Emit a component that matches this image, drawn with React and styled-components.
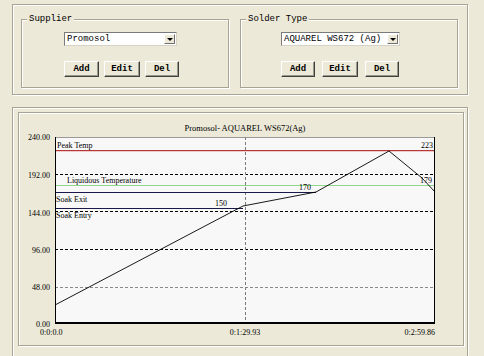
import React from 'react';
import styled, { createGlobalStyle } from 'styled-components';

const Global = createGlobalStyle`
  html, body { margin: 0; padding: 0; background: #ECE9D8; }
  body { width: 484px; height: 356px; overflow: hidden; font-family: "Liberation Mono", monospace; }
`;

const Window = styled.div`
  box-sizing: border-box;
  width: 484px;
  height: 356px;
  overflow: hidden;
  padding: 4px 16px 0 12px;
  display: flex;
  flex-direction: column;
  background: #ECE9D8;
`;

const TopFrame = styled.div`
  box-sizing: border-box;
  flex-shrink: 0;
  height: 91px;
  border: 1px solid #A7A493;
  box-shadow: inset 1px 1px 0 #fff, 1px 1px 0 #fff;
  display: flex;
  align-items: flex-start;
  gap: 11px;
  padding: 14px 0 0 8px;
`;

const Group = styled.div`
  position: relative;
  box-sizing: border-box;
  width: ${(p) => p.$width}px;
  height: 69px;
  border: 1px solid #A7A493;
  box-shadow: inset 1px 1px 0 #fff, 1px 1px 0 #fff;
  padding: 12px 0 0 ${(p) => p.$inset}px;
  display: flex;
  flex-direction: column;
  align-items: flex-start;
  gap: 15px;
`;

const Caption = styled.span`
  position: absolute;
  top: -7px;
  left: 5px;
  padding: 0 2px;
  background: #ECE9D8;
  font-size: 9px;
  line-height: 12px;
  color: #000;
`;

const Combo = styled.div`
  box-sizing: border-box;
  width: ${(p) => p.$width}px;
  height: 14px;
  background: #fff;
  border: 1px solid;
  border-color: #7A7A7A #D6D3C6 #D6D3C6 #7A7A7A;
  display: flex;
  align-items: center;
  justify-content: space-between;
  padding: 0 1px 0 2px;
`;

const ComboText = styled.span`
  font-size: 9px;
  line-height: 11px;
  color: #000;
  white-space: pre;
`;

const ArrowBtn = styled.span`
  box-sizing: border-box;
  width: 11px;
  height: 10px;
  background: #ECE9D8;
  border: 1px solid;
  border-color: #fff #707070 #707070 #fff;
  display: flex;
  align-items: center;
  justify-content: center;
`;

const Triangle = styled.span`
  width: 0;
  height: 0;
  border-left: 3px solid transparent;
  border-right: 3px solid transparent;
  border-top: 3px solid #000;
`;

const ButtonRow = styled.div`
  display: flex;
  gap: ${(p) => p.$gap}px;
`;

const Button = styled.button`
  box-sizing: border-box;
  width: ${(p) => p.$width || 35}px;
  height: 16px;
  margin: 0;
  padding: 0;
  background: #ECE9D8;
  border: 1px solid;
  border-color: #fff #404040 #404040 #fff;
  box-shadow: inset -1px -1px 0 #9A9888;
  font-family: "Liberation Mono", monospace;
  font-weight: bold;
  font-size: 9px;
  line-height: 12px;
  color: #000;
`;

const BottomFrame = styled.div`
  box-sizing: border-box;
  margin-top: 12px;
  height: 262px;
  flex-shrink: 0;
  border: 1px solid #A7A493;
  box-shadow: inset 1px 1px 0 #fff, 1px 1px 0 #fff;
  padding: 4px 3px 0 5px;
  display: flex;
  flex-direction: column;
`;

const ChartPanel = styled.div`
  box-sizing: border-box;
  flex-shrink: 0;
  height: 234px;
  border: 1px solid #A7A493;
  box-shadow: inset 1px 1px 0 #fff, 1px 1px 0 #fff;
  display: flex;
`;

const ChartSvg = styled.svg`
  display: block;
  font-family: "Liberation Serif", serif;
`;

const PL = 55, PR = 435, PT = 137, PB = 324;

const yTicks = [
  { label: '240.00', y: 140 },
  { label: '192.00', y: 178 },
  { label: '144.00', y: 216 },
  { label: '96.00', y: 253 },
  { label: '48.00', y: 290 },
];

const grid = [
  { y: 174.5, c: '#000' },
  { y: 211.5, c: '#000' },
  { y: 249.5, c: '#000' },
  { y: 287.5, c: '#8A8A8A' },
];

const refs = [
  { y: 150.5, x2: PR, c: '#B03A3A' },
  { y: 185.5, x2: PR, c: '#8ED88E' },
  { y: 192.5, x2: 316, c: '#1A1A4A' },
  { y: 208.5, x2: 243, c: '#1A1A4A' },
];

const labels = [
  { t: 'Peak Temp', x: 57, y: 148 },
  { t: '223', x: 433, y: 148, a: 'end' },
  { t: 'Liquidous Temperature', x: 67, y: 183 },
  { t: '179', x: 420, y: 183 },
  { t: 'Soak Exit', x: 56, y: 202 },
  { t: 'Soak Entry', x: 56, y: 218 },
  { t: '150', x: 215, y: 206 },
  { t: '170', x: 299, y: 190 },
];

function Chart() {
  return (
    <ChartSvg width="443" height="232" viewBox="19 113 443 232">
      <text x="245" y="131" fontSize="8.5" textAnchor="middle" fill="#000">
        Promosol- AQUAREL WS672(Ag)
      </text>
      <rect x={PL} y={PT} width={PR - PL} height={PB - PT} fill="#F8F8F8" />
      <line x1={PL} y1={PT + 0.5} x2={PR} y2={PT + 0.5} stroke="#9A9A9A" />
      {grid.map((g) => (
        <line key={g.y} x1={PL} y1={g.y} x2={PR} y2={g.y} stroke={g.c} strokeDasharray="3 2" />
      ))}
      <line x1="245.5" y1={PT} x2="245.5" y2={PB} stroke="#7A7A7A" strokeDasharray="3 2" />
      {refs.map((r) => (
        <line key={r.y} x1={PL} y1={r.y} x2={r.x2} y2={r.y} stroke={r.c} />
      ))}
      <line x1={PL} y1="151.5" x2={PR} y2="151.5" stroke="#F2C8C8" />
      <polyline
        points="55,305 243,206 316,192 389,151 422,178 435,192"
        fill="none"
        stroke="#000"
        strokeWidth="0.9"
      />
      <line x1={PL + 0.5} y1={PT} x2={PL + 0.5} y2={PB} stroke="#000" />
      <line x1={PR - 0.5} y1={PT} x2={PR - 0.5} y2={PB} stroke="#000" />
      <line x1={PL} y1={PB - 1} x2={PR} y2={PB - 1} stroke="#000" strokeWidth="2" />
      {labels.map((l) => (
        <text key={l.t} x={l.x} y={l.y} fontSize="8" textAnchor={l.a || 'start'} fill="#000">
          {l.t}
        </text>
      ))}
      {yTicks.map((t) => (
        <text key={t.label} x="50" y={t.y} fontSize="8" textAnchor="end" fill="#000">
          {t.label}
        </text>
      ))}
      <text x="50" y="327" fontSize="8" textAnchor="end" fill="#000">0.00</text>
      <text x="40" y="335" fontSize="8" fill="#000">0:0:0.0</text>
      <text x="245" y="335" fontSize="8" textAnchor="middle" fill="#000">0:1:29.93</text>
      <text x="435" y="335" fontSize="8" textAnchor="end" fill="#000">0:2:59.86</text>
    </ChartSvg>
  );
}

function ComboBox({ value, width }) {
  return (
    <Combo $width={width}>
      <ComboText>{value}</ComboText>
      <ArrowBtn>
        <Triangle />
      </ArrowBtn>
    </Combo>
  );
}

export default function App() {
  return (
    <>
      <Global />
      <Window>
        <TopFrame>
          <Group $width={208} $inset={42}>
            <Caption>Supplier</Caption>
            <ComboBox value="Promosol" width={113} />
            <ButtonRow $gap={5}>
              <Button $width={35}>Add</Button>
              <Button $width={36}>Edit</Button>
              <Button $width={34}>Del</Button>
            </ButtonRow>
          </Group>
          <Group $width={218} $inset={40}>
            <Caption>Solder Type</Caption>
            <ComboBox value="AQUAREL WS672 (Ag)" width={119} />
            <ButtonRow $gap={7}>
              <Button $width={34}>Add</Button>
              <Button $width={36}>Edit</Button>
              <Button $width={34}>Del</Button>
            </ButtonRow>
          </Group>
        </TopFrame>
        <BottomFrame>
          <ChartPanel>
            <Chart />
          </ChartPanel>
        </BottomFrame>
      </Window>
    </>
  );
}
